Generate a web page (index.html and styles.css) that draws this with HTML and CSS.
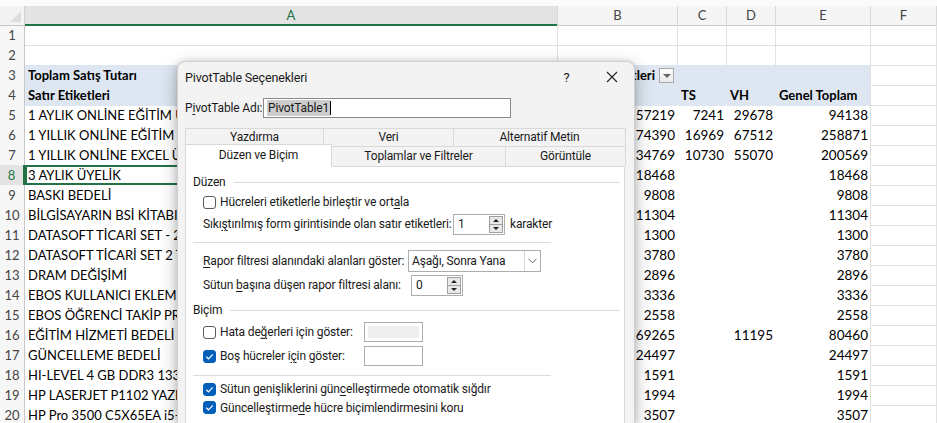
FILE: index.html
```html
<!DOCTYPE html>
<html lang="tr">
<head>
<meta charset="utf-8">
<title>PivotTable Seçenekleri</title>
<link rel="stylesheet" href="styles.css">
</head>
<body>
<div class="sheet">
  <div class="topstrip"></div>
  <div class="row hdr">
    <div class="corner"><span class="tri"></span></div>
    <div class="ch sel">A</div>
    <div class="ch">B</div>
    <div class="ch">C</div>
    <div class="ch">D</div>
    <div class="ch">E</div>
    <div class="ch">F</div>
  </div>
  <div class="row"><div class="rh">1</div><div class="c"></div><div class="c"></div><div class="c"></div><div class="c"></div><div class="c"></div><div class="c"></div></div>
  <div class="row"><div class="rh">2</div><div class="c"></div><div class="c"></div><div class="c"></div><div class="c"></div><div class="c"></div><div class="c"></div></div>
  <div class="row"><div class="rh">3</div><div class="c ph b">Toplam Satış Tutarı</div><div class="c ph b flt"><span>Sütun Etiketleri</span><span class="dd"></span></div><div class="c ph"></div><div class="c ph"></div><div class="c ph pe"></div><div class="c"></div></div>
  <div class="row"><div class="rh">4</div><div class="c ph b">Satır Etiketleri</div><div class="c ph b"></div><div class="c ph b">TS</div><div class="c ph b">VH</div><div class="c ph b pe">Genel Toplam</div><div class="c"></div></div>
  <div class="row"><div class="rh">5</div><div class="c pv">1 AYLIK ONLİNE EĞİTİM ÜYELİĞİ</div><div class="c pv n">57219</div><div class="c pv n">7241</div><div class="c pv n">29678</div><div class="c pv n pe">94138</div><div class="c"></div></div>
  <div class="row"><div class="rh">6</div><div class="c pv">1 YILLIK ONLİNE EĞİTİM BEDELİ</div><div class="c pv n">174390</div><div class="c pv n">16969</div><div class="c pv n">67512</div><div class="c pv n pe">258871</div><div class="c"></div></div>
  <div class="row"><div class="rh">7</div><div class="c pv">1 YILLIK ONLİNE EXCEL ÜYELİĞİ</div><div class="c pv n">134769</div><div class="c pv n">10730</div><div class="c pv n">55070</div><div class="c pv n pe">200569</div><div class="c"></div></div>
  <div class="row"><div class="rh rsel">8</div><div class="c pv active">3 AYLIK ÜYELİK</div><div class="c pv n">18468</div><div class="c pv n"></div><div class="c pv n"></div><div class="c pv n pe">18468</div><div class="c"></div></div>
  <div class="row"><div class="rh">9</div><div class="c pv">BASKI BEDELİ</div><div class="c pv n">9808</div><div class="c pv n"></div><div class="c pv n"></div><div class="c pv n pe">9808</div><div class="c"></div></div>
  <div class="row"><div class="rh">10</div><div class="c pv">BİLGİSAYARIN BSİ KİTABI</div><div class="c pv n">11304</div><div class="c pv n"></div><div class="c pv n"></div><div class="c pv n pe">11304</div><div class="c"></div></div>
  <div class="row"><div class="rh">11</div><div class="c pv">DATASOFT TİCARİ SET - 2 KULLANICI</div><div class="c pv n">1300</div><div class="c pv n"></div><div class="c pv n"></div><div class="c pv n pe">1300</div><div class="c"></div></div>
  <div class="row"><div class="rh">12</div><div class="c pv">DATASOFT TİCARİ SET 2 TEK</div><div class="c pv n">3780</div><div class="c pv n"></div><div class="c pv n"></div><div class="c pv n pe">3780</div><div class="c"></div></div>
  <div class="row"><div class="rh">13</div><div class="c pv">DRAM DEĞİŞİMİ</div><div class="c pv n">2896</div><div class="c pv n"></div><div class="c pv n"></div><div class="c pv n pe">2896</div><div class="c"></div></div>
  <div class="row"><div class="rh">14</div><div class="c pv">EBOS KULLANICI EKLEME</div><div class="c pv n">3336</div><div class="c pv n"></div><div class="c pv n"></div><div class="c pv n pe">3336</div><div class="c"></div></div>
  <div class="row"><div class="rh">15</div><div class="c pv">EBOS ÖĞRENCİ TAKİP PROGRAMI</div><div class="c pv n">2558</div><div class="c pv n"></div><div class="c pv n"></div><div class="c pv n pe">2558</div><div class="c"></div></div>
  <div class="row"><div class="rh">16</div><div class="c pv">EĞİTİM HİZMETİ BEDELİ</div><div class="c pv n">69265</div><div class="c pv n"></div><div class="c pv n">11195</div><div class="c pv n pe">80460</div><div class="c"></div></div>
  <div class="row"><div class="rh">17</div><div class="c pv">GÜNCELLEME BEDELİ</div><div class="c pv n">24497</div><div class="c pv n"></div><div class="c pv n"></div><div class="c pv n pe">24497</div><div class="c"></div></div>
  <div class="row"><div class="rh">18</div><div class="c pv">HI-LEVEL 4 GB DDR3 1333 MHZ</div><div class="c pv n">1591</div><div class="c pv n"></div><div class="c pv n"></div><div class="c pv n pe">1591</div><div class="c"></div></div>
  <div class="row"><div class="rh">19</div><div class="c pv">HP LASERJET P1102 YAZICI</div><div class="c pv n">1994</div><div class="c pv n"></div><div class="c pv n"></div><div class="c pv n pe">1994</div><div class="c"></div></div>
  <div class="row"><div class="rh">20</div><div class="c pv">HP Pro 3500 C5X65EA i5-3470</div><div class="c pv n">3507</div><div class="c pv n"></div><div class="c pv n"></div><div class="c pv n pe">3507</div><div class="c"></div></div>
</div>

<div class="dialog">
  <div class="titlebar">
    <div class="title">PivotTable Seçenekleri</div>
    <div class="tbtn">?</div>
    <div class="tbtn close"><svg width="12" height="12" viewBox="0 0 12 12"><path d="M1 1L11 11M11 1L1 11" stroke="#222" stroke-width="1.1" fill="none"/></svg></div>
  </div>
  <div class="namerow">
    <span class="namelab">P<u>i</u>votTable Adı:</span>
    <div class="nameinput"><span class="selected">PivotTable1</span><span class="caret"></span></div>
  </div>
  <div class="tabs">
    <div class="tabrow back">
      <div class="tab t1">Yazdırma</div>
      <div class="tab t2">Veri</div>
      <div class="tab t3">Alternatif Metin</div>
    </div>
    <div class="tabrow front">
      <div class="tab t4 on">Düzen ve Biçim</div>
      <div class="tab t5">Toplamlar ve Filtreler</div>
      <div class="tab t6">Görüntüle</div>
    </div>
  </div>
  <div class="panel">
    <div class="group"><span>Düzen</span><span class="gline"></span></div>
    <div class="opt r20"><span class="cb"></span><span>Hücreleri etiketlerle birleştir ve ort<u>a</u>la</span></div>
    <div class="opt r24"><span class="l1">Sıkı<u>ş</u>tırılmış form girintisinde olan satır etiketleri:</span>
      <div class="spin"><span>1</span><span class="spb"><span class="up"></span><span class="dn"></span></span></div>
      <span class="after">karakter</span></div>
    <div class="sep s1"></div>
    <div class="opt r24"><span class="l2"><u>R</u>apor filtresi alanındaki alanları göster:</span>
      <div class="combo"><span>Aşağı, Sonra Yana</span><span class="cbtn"><svg width="9" height="6" viewBox="0 0 9 6"><path d="M0.5 0.8L4.5 4.8L8.5 0.8" stroke="#666" stroke-width="1" fill="none"/></svg></span></div></div>
    <div class="opt r24"><span class="l3">Sütun <u>b</u>aşına düşen rapor filtresi alanı:</span>
      <div class="spin"><span>0</span><span class="spb"><span class="up"></span><span class="dn"></span></span></div></div>
    <div class="group g2"><span>Biçim</span><span class="gline"></span></div>
    <div class="opt r24"><span class="cb"></span><span class="lab">Hata de<u>ğ</u>erleri için göster:</span><div class="tbox dis"><span></span></div></div>
    <div class="opt r24"><span class="cb on"><svg width="13" height="13" viewBox="0 0 13 13"><path d="M3.3 6.7L5.5 8.8L9.8 4.3" stroke="#fff" stroke-width="1.2" fill="none"/></svg></span><span class="lab">Boş hücreler i<u>ç</u>in göster:</span><div class="tbox"></div></div>
    <div class="sep s2"></div>
    <div class="opt r18"><span class="cb on"><svg width="13" height="13" viewBox="0 0 13 13"><path d="M3.3 6.7L5.5 8.8L9.8 4.3" stroke="#fff" stroke-width="1.2" fill="none"/></svg></span><span>Sütun genişliklerini gün<u>c</u>elleştirmede otomatik sığdır</span></div>
    <div class="opt r19"><span class="cb on"><svg width="13" height="13" viewBox="0 0 13 13"><path d="M3.3 6.7L5.5 8.8L9.8 4.3" stroke="#fff" stroke-width="1.2" fill="none"/></svg></span><span>Güncelleştirme<u>d</u>e hücre biçimlendirmesini koru</span></div>
  </div>
</div>
</body>
</html>
```

FILE: styles.css
```css
* { box-sizing: border-box; }
html, body { margin: 0; padding: 0; }
body {
  width: 937px;
  height: 423px;
  overflow: hidden;
  background: #fff;
  font-family: "Lato", "Liberation Sans", sans-serif;
  font-size: 13px;
  color: #000;
  position: relative;
}

.sheet { width: 937px; height: 423px; overflow: hidden; }
.topstrip { height: 6px; background: #fbfbfb; }

.row {
  display: grid;
  grid-template-columns: 25px 533px 120px 49px 49px 95px 66px;
  height: 20px;
}
.row.hdr { height: 19px; }

.corner {
  background: #f3f3f3;
  border-right: 1px solid #d0d0d0;
  border-bottom: 1px solid #c8c8c8;
  position: relative;
}
.corner .tri {
  position: absolute;
  right: 3px;
  bottom: 3px;
  width: 0; height: 0;
  border-left: 11px solid transparent;
  border-bottom: 11px solid #dcdcdc;
}
.ch {
  background: #f5f5f5;
  border-right: 1px solid #d8d8d8;
  border-bottom: 1px solid #c8c8c8;
  text-align: center;
  color: #444;
  font-size: 13px;
  line-height: 19px;
}
.ch.sel {
  background: #e3e3e3;
  color: #217346;
  border-bottom: 2px solid #217346;
  line-height: 18px;
}

.rh {
  background: #f7f7f7;
  border-right: 1px solid #c8c8c8;
  border-bottom: 1px solid #e3e3e3;
  text-align: center;
  color: #444;
  font-size: 13px;
  line-height: 20px;
}
.rh.rsel { background: #e3e3e3; color: #217346; border-right: 2px solid #217346; }

.c {
  border-right: 1px solid #e1e1e1;
  border-bottom: 1px solid #e1e1e1;
  padding: 0 3px;
  line-height: 20px;
  white-space: nowrap;
  overflow: hidden;
}
.c.n { text-align: right; padding-right: 2px; font-size: 13.5px; }
.c.b { font-weight: bold; }
.c.pv { border-right-color: #fff; border-bottom-color: #fff; }
.c.ph { background: #dde6f1; border-right-color: #dde6f1; border-bottom-color: #dde6f1; }
.c.pe { border-right-color: #e1e1e1; }
.c.active { box-shadow: inset 0 0 0 2px #217346; }

.flt { display: flex; align-items: center; justify-content: flex-end; gap: 4px; }
.dd {
  width: 15px; height: 15px;
  border: 1px solid #a9a9a9;
  background: linear-gradient(#fdfdfd, #eaeaea);
  position: relative;
  flex: none;
}
.dd::after {
  content: "";
  position: absolute;
  left: 3px; top: 5px;
  border-left: 4px solid transparent;
  border-right: 4px solid transparent;
  border-top: 4px solid #666;
}

/* Dialog */
.dialog {
  position: absolute;
  left: 177px;
  top: 61px;
  width: 458px;
  height: 362px;
  background: #f3f3f3;
  border: 1px solid #cfcfcf;
  border-bottom: none;
  border-radius: 8px 8px 0 0;
  box-shadow: 0 6px 18px rgba(0,0,0,0.28), 0 0 6px rgba(0,0,0,0.12);
  font-family: "Roboto", "Noto Sans", sans-serif;
  font-size: 12px;
  letter-spacing: -0.15px;
  color: #1a1a1a;
  display: flex;
  flex-direction: column;
  white-space: nowrap;
}
.titlebar {
  height: 30px;
  display: flex;
  align-items: center;
  padding-left: 7px;
}
.title { flex: 1; font-size: 12.5px; }
.tbtn {
  width: 45px;
  height: 30px;
  display: flex;
  align-items: center;
  justify-content: center;
  font-size: 13px;
}
.namerow {
  margin-top: 6px;
  height: 20px;
  display: flex;
  align-items: center;
  padding-left: 7px;
}
.namelab { width: 78px; flex: none; }
.nameinput {
  width: 248px;
  height: 20px;
  background: #fff;
  border: 1px solid #8a8a8a;
  display: flex;
  align-items: center;
  padding-left: 3px;
}
.nameinput .selected { background: #cccccc; padding: 0 1px; line-height: 16px; }
.caret { width: 1px; height: 14px; background: #000; }

.tabs { margin-top: 10px; padding: 0 9px 0 7px; }
.tabrow { display: flex; }
.tab {
  text-align: center;
  border: 1px solid #d9d9d9;
  border-bottom: none;
  background: #f3f3f3;
  margin-right: -1px;
}
.back .tab { height: 18px; line-height: 17px; }
.front { height: 20px; align-items: flex-end; }
.front .tab { height: 20px; line-height: 19px; }
.front .tab.on { height: 23px; line-height: 21px; background: #fff; position: relative; z-index: 1; margin-bottom: -1px; margin-top: -3px; }
.t1 { width: 139px; }
.t2 { width: 131px; }
.t3 { width: 173px; }
.t4 { width: 147px; }
.t5 { width: 175px; }
.t6 { width: 121px; }

.panel {
  margin: 0 9px 0 7px;
  flex: 1;
  background: #fff;
  border: 1px solid #d9d9d9;
  border-bottom: none;
  padding: 5px 4px 0 7px;
  display: flex;
  flex-direction: column;
}
.group { height: 20px; display: flex; align-items: center; gap: 8px; }
.group.g2 { margin-top: 3px; }
.gline { flex: 1; height: 1px; background: #dcdcdc; }
.opt { display: flex; align-items: center; padding-left: 10px; white-space: nowrap; }
.r18 { height: 18px; }
.r19 { height: 19px; }
.r20 { height: 20px; }
.r24 { height: 24px; }
.cb {
  width: 13px; height: 13px;
  border: 1px solid #5a5a5a;
  border-radius: 3px;
  background: #fff;
  flex: none;
  display: flex;
  margin-right: 4px;
}
.cb.on { background: #005fb8; border-color: #005fb8; }
.cb svg { margin: -1px; }
.sep { height: 1px; background: #dcdcdc; width: 358px; }
.sep.s1 { margin: 6px 0 6px 0; }
.sep.s2 { margin: 7px 0 4px 0; }

.l1 { width: 250px; flex: none; }
.l2 { width: 205px; flex: none; }
.l3 { width: 208px; flex: none; }
.lab { width: 144px; flex: none; }
.after { margin-left: 5px; }

.spin {
  width: 52px;
  height: 21px;
  background: #fff;
  border: 1px solid #adadad;
  display: flex;
  align-items: center;
  justify-content: space-between;
  padding-left: 4px;
}
.spb {
  width: 14px; height: 17px;
  margin-right: 1px;
  border: 1px solid #a0a0a0;
  background: #e9e9e9;
  display: flex;
  flex-direction: column;
}
.spb .up, .spb .dn { flex: 1; position: relative; }
.spb .up { border-bottom: 1px solid #a0a0a0; }
.spb .up::after, .spb .dn::after {
  content: "";
  position: absolute;
  left: 3px;
  border-left: 3px solid transparent;
  border-right: 3px solid transparent;
}
.spb .up::after { top: 2px; border-bottom: 3px solid #222; }
.spb .dn::after { top: 2px; border-top: 3px solid #222; }

.combo {
  width: 133px;
  height: 22px;
  background: #fff;
  border: 1px solid #adadad;
  display: flex;
  align-items: center;
  justify-content: space-between;
  padding-left: 3px;
}
.cbtn {
  width: 16px; height: 20px;
  border-left: 1px solid #d4d4d4;
  display: flex; align-items: center; justify-content: center;
}
.tbox {
  width: 59px; height: 20px;
  background: #fff;
  border: 1px solid #adadad;
  padding: 3px;
}
.tbox.dis span { display: block; height: 100%; background: #efefef; }
u { text-underline-offset: 2px; }
```
